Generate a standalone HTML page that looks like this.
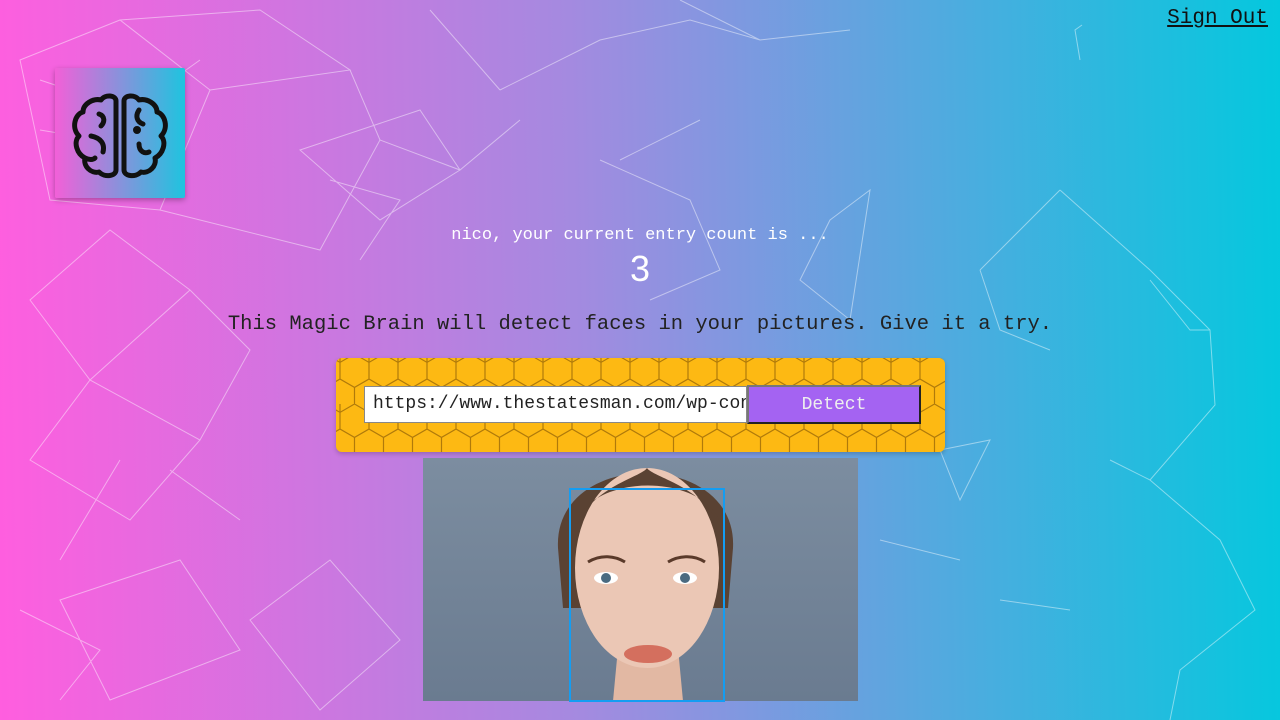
<!DOCTYPE html>
<html><head><meta charset="utf-8"><style>
html,body{margin:0;padding:0;width:1280px;height:720px;overflow:hidden}
body{background:linear-gradient(89deg,#ff5edf 0%,#a48ae0 45%,#04c8de 100%);font-family:"Liberation Mono",monospace;position:relative}
#net{position:absolute;left:0;top:0}
.signout{position:absolute;right:12px;top:7px;font-size:21px;color:#111;text-decoration:underline}
.logo{position:absolute;left:55px;top:68px;width:130px;height:130px;background:linear-gradient(90deg,#f260d8,#1ec4df);box-shadow:0 2px 6px rgba(0,0,0,.3);border-radius:2px}
.t1{position:absolute;left:0;width:1280px;top:226px;text-align:center;color:#fff;font-size:17px}
.t2{position:absolute;left:0;width:1280px;top:248px;text-align:center;color:#fff;font-size:36px;font-family:"Liberation Sans",sans-serif;font-weight:300}
.t3{position:absolute;left:0;width:1280px;top:313px;text-align:center;color:#222;font-size:20.5px}
.box{position:absolute;left:336px;top:358px;width:609px;height:94px;border-radius:6px;background:#fdb913;overflow:hidden;box-shadow:0 2px 5px rgba(0,0,0,.2)}
.inp{position:absolute;left:364px;top:386px;width:383px;height:37px;background:#fff;border:1px solid #888;box-sizing:border-box;font-size:18px;line-height:35px;padding-left:8px;color:#222;white-space:nowrap;overflow:hidden}
.btn{position:absolute;left:747px;top:385px;width:174px;height:39px;background:#a463f2;border:2px outset #777;box-sizing:border-box;color:#eee;font-size:18px;text-align:center;line-height:36px}
.img{position:absolute;left:423px;top:458px;width:435px;height:243px;background:linear-gradient(180deg,#7c8da0,#6a7b90);overflow:hidden}
.fbox{position:absolute;left:569px;top:488px;width:152px;height:210px;border:2px solid #149df2}
</style></head><body>
<svg id="net" width="1280" height="720" stroke="#fff" stroke-opacity=".45" stroke-width="1" fill="none">
<path d="M20 60 L120 20 L210 90 L160 210 L50 200 Z M120 20 L260 10 L350 70 L210 90 M350 70 L380 140 L320 250 L160 210 M30 300 L110 230 L190 290 L90 380 Z M90 380 L200 440 L130 520 L30 460 Z M190 290 L250 350 L200 440 M60 600 L180 560 L240 650 L110 700 Z M250 620 L330 560 L400 640 L320 710 Z M500 90 L600 40 L690 20 L760 40 L850 30 M500 90 L430 10 M600 160 L690 200 L720 270 L650 300 M760 40 L680 0 M830 220 L870 190 L850 320 L800 280 Z M1060 190 L1150 270 L1210 330 L1215 405 L1150 480 L1110 460 M980 270 L1060 190 M980 270 L1000 330 L1050 350 M1150 480 L1220 540 L1255 610 L1180 670 L1170 720 M940 450 L990 440 L960 500 Z M1080 60 L1075 30 L1082 25 M300 150 L420 110 L460 170 L380 220 Z M20 610 L100 650 L60 700 M1000 600 L1070 610 M880 540 L960 560 M1150 280 L1190 330 L1210 330 M40 80 L130 110 L200 60 M380 140 L460 170 L520 120 M330 180 L400 200 L360 260 M120 460 L60 560 M170 470 L240 520 M620 160 L700 120 M40 130 L160 150"/>
</svg>
<div class="signout">Sign Out</div>
<div class="logo"><svg width="130" height="130" viewBox="0 0 130 130" fill="none" stroke="#111" stroke-width="5" stroke-linecap="round" stroke-linejoin="round">
<path d="M61 33 V102 C61 108 50 110 44 104 C36 106 28 98 30 90 C22 86 18 74 24 68 C16 60 20 46 28 44 C28 36 38 30 46 32 C50 26 61 27 61 33 Z"/>
<path d="M69 33 V102 C69 108 80 110 86 104 C94 106 102 98 100 90 C108 86 112 74 106 68 C114 60 110 46 102 44 C102 36 92 30 84 32 C80 26 69 27 69 33 Z"/>
<path d="M44 46 C50 48 50 54 46 58 M36 68 C46 70 50 76 48 84 M84 42 C80 48 82 54 88 56 M84 76 C84 84 90 86 94 84 M30 90 C34 92 38 92 40 90"/>
<circle cx="82" cy="62" r="1.5" fill="#111"/>
</svg></div>
<div class="t1">nico, your current entry count is ...</div>
<div class="t2">3</div>
<div class="t3">This Magic Brain will detect faces in your pictures. Give it a try.</div>
<div class="box"><svg width="609" height="94"><defs><pattern id="hx" width="29" height="50" patternUnits="userSpaceOnUse" x="4" y="-4">
<path d="M14.5 0 L29 8.4 V25 L14.5 33.4 L0 25 V8.4 Z M14.5 33.4 V50 M0 8.4 V0 M29 8.4 V0" fill="none" stroke="#b07a0a" stroke-width="1.2"/>
<path d="M0 25 L-14.5 33.4 M29 25 L43.5 33.4" stroke="#b07a0a" stroke-width="1.2"/>
</pattern></defs><rect width="609" height="94" fill="url(#hx)"/></svg></div>
<div class="inp">https://www.thestatesman.com/wp-content</div>
<div class="btn">Detect</div>
<div class="img"><svg width="435" height="243">
<path d="M135 90 C130 -10 315 -10 310 90 L305 150 L140 150 Z" fill="#5a4233"/>
<path d="M190 243 L195 190 L255 190 L260 243 Z" fill="#e2b8a3"/>
<ellipse cx="224" cy="110" rx="72" ry="100" fill="#ebc7b5"/>
<path d="M150 80 C150 10 300 10 300 80 C290 30 230 20 224 10 C218 20 160 30 150 80 Z" fill="#5a4233"/>
<ellipse cx="183" cy="120" rx="12" ry="6" fill="#fff"/><circle cx="183" cy="120" r="5" fill="#4a6a80"/>
<ellipse cx="262" cy="120" rx="12" ry="6" fill="#fff"/><circle cx="262" cy="120" r="5" fill="#4a6a80"/>
<path d="M165 104 C178 96 192 98 202 104 M245 104 C255 98 270 96 282 104" stroke="#5a3a2a" stroke-width="3" fill="none"/>
<ellipse cx="225" cy="196" rx="24" ry="9" fill="#d46f5e"/>
</svg></div>
<div class="fbox"></div>
</body></html>
